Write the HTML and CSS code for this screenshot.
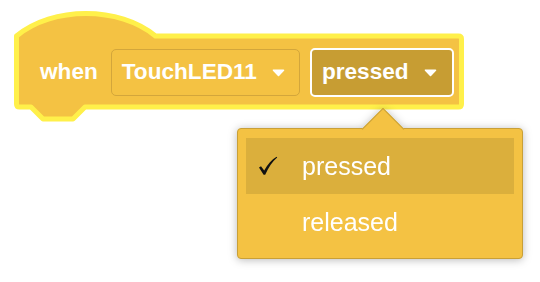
FILE: index.html
```html
<!DOCTYPE html>
<html>
<head>
<meta charset="utf-8">
<link rel="stylesheet" href="styles.css">
</head>
<body>
<div class="stage">
  <div class="block">
    <svg class="block-shape" width="470" height="126" viewBox="0 0 470 126">
      <path d="M16.5,36 C52.5,6 119.5,6 155.5,36 H458.5 Q461.5,36 461.5,39 V104 Q461.5,107 458.5,107 H85 L73,119 H43 L31,107 H19.5 Q16.5,107 16.5,104 Z" fill="#F4C243" stroke="#FFF04A" stroke-width="5" stroke-linejoin="round"/>
    </svg>
    <div class="row">
      <span class="label">when</span>
      <div class="field">
        <span class="field-text">TouchLED11</span>
        <svg class="caret" width="13" height="8" viewBox="0 0 13 8"><path d="M1.5,1.2 H11.5 L6.5,6.5 Z" fill="#fff" stroke="#fff" stroke-width="1.6" stroke-linejoin="round"/></svg>
      </div>
      <div class="field field-active">
        <span class="field-text">pressed</span>
        <svg class="caret" width="13" height="8" viewBox="0 0 13 8"><path d="M1.5,1.2 H11.5 L6.5,6.5 Z" fill="#fff" stroke="#fff" stroke-width="1.6" stroke-linejoin="round"/></svg>
      </div>
    </div>
  </div>
  <div class="menu">
    <div class="menu-arrow"><div class="menu-arrow-sq"></div></div>
    <div class="item item-selected">
      <svg class="check" width="20" height="20" viewBox="0 0 20 20"><path d="M1,11.5 L3,10.2 L6.2,14.6 C9.5,8.5 13.5,3.5 18.6,0.8 L19.2,1.6 C14.5,5.5 10.5,11.5 7.2,18.8 L5.6,18.8 Z" fill="#111"/></svg>
      <span class="item-text">pressed</span>
    </div>
    <div class="item">
      <span class="check-space"></span>
      <span class="item-text">released</span>
    </div>
  </div>
</div>
</body>
</html>
```
FILE: styles.css
```css
html, body {
  margin: 0;
  padding: 0;
  background: #ffffff;
}
.stage {
  position: relative;
  width: 540px;
  height: 282px;
  overflow: hidden;
  font-family: "Liberation Sans", Arial, sans-serif;
}
.block {
  position: relative;
  width: 470px;
  height: 126px;
}
.block-shape {
  position: absolute;
  left: 0;
  top: 0;
}
.row {
  position: relative;
  display: flex;
  align-items: center;
  height: 50px;
  padding-top: 47px;
  padding-left: 40px;
}
.label {
  color: #ffffff;
  font-weight: bold;
  font-size: 22.6px;
  margin-right: 13px;
}
.field {
  box-sizing: border-box;
  display: flex;
  align-items: center;
  height: 47px;
  border: 1px solid #D3A63B;
  border-radius: 5px;
  background: #F4C243;
  padding: 0 14px 0 10px;
  gap: 15px;
}
.field-active {
  height: 49px;
  margin-left: 10px;
  border: 2px solid #ffffff;
  background: #C79D33;
  padding: 0 15px 0 10px;
}
.field-text {
  color: #ffffff;
  font-weight: bold;
  font-size: 22.6px;
}
.caret {
  display: block;
  margin-top: 1px;
}
.menu {
  position: absolute;
  left: 237px;
  top: 128px;
  width: 286px;
  box-sizing: border-box;
  background: #F4C243;
  border: 1px solid #C9A037;
  border-radius: 4px;
  padding: 9px 8px 8px 8px;
  filter: drop-shadow(0 1px 4px rgba(0, 0, 0, 0.28));
}
.menu-arrow {
  position: absolute;
  left: 123px;
  top: -21px;
  width: 44px;
  height: 22px;
  overflow: hidden;
}
.menu-arrow-sq {
  position: absolute;
  left: 7px;
  top: 6px;
  width: 30px;
  height: 30px;
  box-sizing: border-box;
  background: #F4C243;
  border-top: 1px solid #C9A037;
  border-left: 1px solid #C9A037;
  transform: rotate(45deg);
}
.item {
  position: relative;
  display: flex;
  align-items: center;
  height: 56px;
  padding-left: 12px;
}
.item-selected {
  background: #DBAF3C;
}
.check, .check-space {
  display: block;
  width: 20px;
  height: 20px;
  margin-right: 24px;
  flex: none;
}
.item-text {
  color: #ffffff;
  font-size: 25px;
  line-height: 56px;
}
```
